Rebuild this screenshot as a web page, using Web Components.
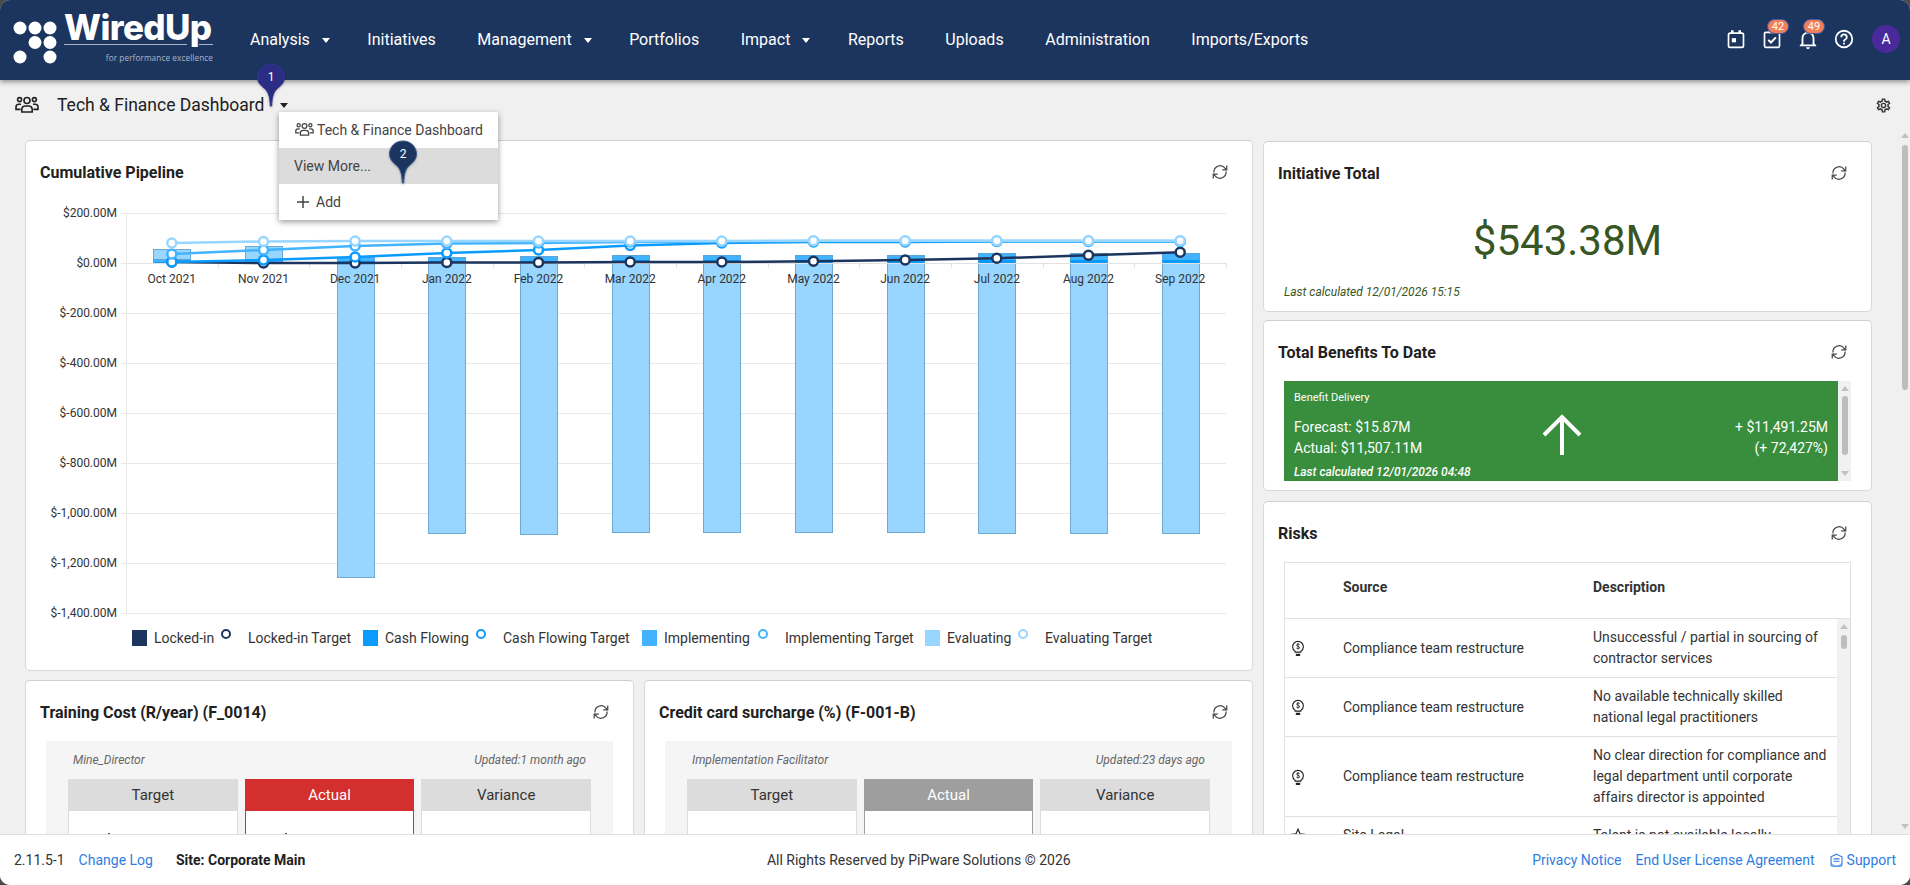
<!DOCTYPE html>
<html lang="en">
<head>
<meta charset="utf-8">
<title>WiredUp</title>
<style>
  html, body { margin: 0; height: 100%; background: #4a4a4a; overflow: hidden; }
</style>
</head>
<body>

<wu-app>
  <wu-topbar></wu-topbar>
  <wu-subbar heading="Tech &amp; Finance Dashboard"></wu-subbar>
  <wu-dashboard>
    <wu-card slot="left" flush heading="Cumulative Pipeline" style="height:531px">
      <wu-pipeline-chart></wu-pipeline-chart>
    </wu-card>
    <wu-card slot="bottom-a" heading="Training Cost (R/year) (F_0014)">
      <wu-kpi-panel owner="Mine_Director" updated="Updated:1 month ago">
        <wu-kpi-tile label="Target" mark></wu-kpi-tile>
        <wu-kpi-tile label="Actual" tone="red" mark></wu-kpi-tile>
        <wu-kpi-tile label="Variance"></wu-kpi-tile>
      </wu-kpi-panel>
    </wu-card>
    <wu-card slot="bottom-b" heading="Credit card surcharge (%) (F-001-B)">
      <wu-kpi-panel owner="Implementation Facilitator" updated="Updated:23 days ago">
        <wu-kpi-tile label="Target"></wu-kpi-tile>
        <wu-kpi-tile label="Actual" tone="grey"></wu-kpi-tile>
        <wu-kpi-tile label="Variance"></wu-kpi-tile>
      </wu-kpi-panel>
    </wu-card>
    <wu-card slot="right" heading="Initiative Total" style="height:171px">
      <wu-total value="$543.38M" note="Last calculated 12/01/2026 15:15"></wu-total>
    </wu-card>
    <wu-card slot="right" heading="Total Benefits To Date" style="height:171px;margin-top:8px">
      <wu-benefit-panel></wu-benefit-panel>
    </wu-card>
    <wu-card slot="right" heading="Risks" style="margin-top:10px">
      <wu-risk-table>
        <wu-risk-row source="Compliance team restructure">Unsuccessful / partial in sourcing of<br>contractor services</wu-risk-row>
        <wu-risk-row source="Compliance team restructure">No available technically skilled<br>national legal practitioners</wu-risk-row>
        <wu-risk-row source="Compliance team restructure">No clear direction for compliance and<br>legal department until corporate<br>affairs director is appointed</wu-risk-row>
        <wu-risk-row source="Site Legal" icon="star">Talent is not available locally</wu-risk-row>
      </wu-risk-table>
    </wu-card>
  </wu-dashboard>
  <wu-footer></wu-footer>
</wu-app>

<script>
const ICONS = {
    people: `<g fill="none" stroke="currentColor" stroke-width="1.6"><circle cx="12" cy="7.5" r="3"/><circle cx="4.6" cy="6.6" r="2"/><circle cx="19.4" cy="6.6" r="2"/><path d="M6.8 19v-2.6a3.6 3.6 0 0 1 3.6-3.4h3.2a3.6 3.6 0 0 1 3.6 3.4V19z"/><path d="M6 11.2H3.8A2.8 2.8 0 0 0 1 14v2.4h4.6"/><path d="M18 11.2h2.2A2.8 2.8 0 0 1 23 14v2.4h-4.6"/></g>`,
    refresh: `<g fill="none" stroke="currentColor" stroke-width="1.1"><path d="M2.6 8.4A5.5 5.5 0 0 1 12.4 4.6L13.6 6"/><path d="M14 2.2V6.2H10"/><path d="M13.4 7.6A5.5 5.5 0 0 1 3.6 11.4L2.4 10"/><path d="M2 13.8V9.8H6"/></g>`,
    gear: `<path fill="currentColor" d="M12,8A4,4 0 0,1 16,12A4,4 0 0,1 12,16A4,4 0 0,1 8,12A4,4 0 0,1 12,8M12,10A2,2 0 0,0 10,12A2,2 0 0,0 12,14A2,2 0 0,0 14,12A2,2 0 0,0 12,10M10,22C9.75,22 9.54,21.82 9.5,21.58L9.13,18.93C8.5,18.68 7.96,18.34 7.44,17.94L4.95,18.95C4.73,19.03 4.46,18.95 4.34,18.73L2.34,15.27C2.21,15.05 2.27,14.78 2.46,14.63L4.57,12.97L4.5,12L4.57,11L2.46,9.37C2.27,9.22 2.21,8.95 2.34,8.73L4.34,5.27C4.46,5.05 4.73,4.96 4.95,5.05L7.44,6.05C7.96,5.66 8.5,5.32 9.13,5.07L9.5,2.42C9.54,2.18 9.75,2 10,2H14C14.25,2 14.46,2.18 14.5,2.42L14.87,5.07C15.5,5.32 16.04,5.66 16.56,6.05L19.05,5.05C19.27,4.96 19.54,5.05 19.66,5.27L21.66,8.73C21.79,8.95 21.73,9.22 21.54,9.37L19.43,11L19.5,12L19.43,13L21.54,14.63C21.73,14.78 21.79,15.05 21.66,15.27L19.66,18.73C19.54,18.95 19.27,19.04 19.05,18.95L16.56,17.95C16.04,18.34 15.5,18.68 14.87,18.93L14.5,21.58C14.46,21.82 14.25,22 14,22H10M11.25,4L10.88,6.61C9.68,6.86 8.62,7.5 7.85,8.39L5.44,7.35L4.69,8.65L6.8,10.2C6.4,11.37 6.4,12.64 6.8,13.8L4.68,15.36L5.43,16.66L7.86,15.62C8.63,16.5 9.68,17.14 10.87,17.38L11.24,20H12.76L13.13,17.39C14.32,17.14 15.37,16.5 16.14,15.62L18.57,16.66L19.32,15.36L17.2,13.81C17.6,12.64 17.6,11.37 17.2,10.2L19.31,8.65L18.56,7.35L16.15,8.39C15.38,7.5 14.32,6.86 13.12,6.62L12.75,4H11.25Z"/>`,
    calendar: `<g fill="none" stroke="currentColor" stroke-width="2"><rect x="3" y="5" width="18" height="17" rx="2"/></g><rect x="6" y="1.5" width="3" height="4" fill="currentColor"/><rect x="15" y="1.5" width="3" height="4" fill="currentColor"/><rect x="7" y="11" width="5" height="5" fill="currentColor"/>`,
    task: `<g fill="none" stroke="currentColor" stroke-width="2"><rect x="3" y="4" width="18" height="18" rx="1.5"/><path d="M7.5 13l3.2 3.2 6-6.2" stroke-width="2.4"/></g><rect x="8" y="1.5" width="8" height="3.5" fill="currentColor"/>`,
    bell: `<path fill="currentColor" d="M10 21H14C14 22.1 13.1 23 12 23S10 22.1 10 21M21 19V20H3V19L5 17V11C5 7.9 7 5.2 10 4.3V4C10 2.9 10.9 2 12 2S14 2.9 14 4V4.3C17 5.2 19 7.9 19 11V17L21 19M17 11C17 8.2 14.8 6 12 6S7 8.2 7 11V18H17V11Z"/>`,
    help: `<path fill="currentColor" d="M11,18H13V16H11V18M12,2A10,10 0 0,0 2,12A10,10 0 0,0 12,22A10,10 0 0,0 22,12A10,10 0 0,0 12,2M12,20C7.59,20 4,16.41 4,12C4,7.59 7.59,4 12,4C16.41,4 20,7.59 20,12C20,16.41 16.41,20 12,20M12,6A4,4 0 0,0 8,10H10A2,2 0 0,1 12,8A2,2 0 0,1 14,10C14,12 11,11.75 11,15H13C13,12.75 16,12.5 16,10A4,4 0 0,0 12,6Z"/>`,
    bulb: `<g fill="none" stroke="currentColor" stroke-width="1.5"><path d="M8.2 16.5C6 15 4.8 12.8 4.8 10.4a7.2 7.2 0 0 1 14.4 0c0 2.4-1.2 4.6-3.4 6.1v1H8.2z"/><path d="M14.2 7.4c-.4-.9-3.8-1.3-4 .7-.2 2 4.2 1.3 4 3.6-.2 1.8-3.6 1.6-4.3.4" stroke-width="1.2"/><path d="M12 5.4v8.4" stroke-width="1"/></g><rect x="9" y="19.5" width="6" height="3" rx="1" fill="currentColor"/>`,
    star: `<path fill="none" stroke="currentColor" stroke-width="1.6" d="M12 3l2.8 6.2 6.7.7-5 4.5 1.4 6.6L12 17.6 6.1 21l1.4-6.6-5-4.5 6.7-.7z"/>`,
    plus: `<path fill="none" stroke="currentColor" stroke-width="1.5" d="M8 2v12M2 8h12"/>`,
    support: `<g fill="none" stroke="currentColor" stroke-width="1.2"><path d="M8 1.3l5.8 2.7v8.5a1.5 1.5 0 0 1-1.5 1.5H3.7a1.5 1.5 0 0 1-1.5-1.5V4z"/><path d="M4.8 6.2h6.4M4.8 8.8h6.4"/><path d="M2.2 11l4 3M13.8 11l-4 3" stroke-width=".8"/></g>`
};

function icon(name, size, box) {
    return `<svg width="${size}" height="${size}" viewBox="0 0 ${box || 24} ${box || 24}" aria-hidden="true">${ICONS[name]}</svg>`;
}

class WuBase extends HTMLElement {
    constructor() {
        super();
        this.attachShadow({ mode: "open" });
    }
    connectedCallback() {
        const template = document.createElement("template");
        template.innerHTML = `<style>${this.getStyle()}</style>${this.getMarkup()}`;
        this.shadowRoot.appendChild(template.content.cloneNode(true));
    }
    attr(name, fallback) {
        return this.hasAttribute(name) ? this.getAttribute(name) : (fallback || "");
    }
    getStyle() { return ":host{display:block}"; }
    getMarkup() { return "<slot></slot>"; }
}

class WuApp extends WuBase {
    getStyle() {
        return `
            :host {
                display: flex;
                flex-direction: column;
                height: 885px;
                background: #f0f0f0;
                border-radius: 10px;
                overflow: hidden;
                font-family: Roboto, "Liberation Sans", sans-serif;
                color: #212121;
            }
        `;
    }
}

class WuTopbar extends WuBase {
    getStyle() {
        return `
            :host {
                display: flex;
                flex: none;
                align-items: center;
                height: 80px;
                padding: 0 10px 2px 14px;
                box-sizing: border-box;
                background: #1c355e;
                color: #fff;
                box-shadow: 0 2px 5px rgba(0,0,0,.4);
                position: relative;
                z-index: 4;
            }
            .logo { display: flex; align-items: flex-start; width: 236px; flex: none; }
            .logo svg { overflow: visible; }
            .brand { width: 149px; margin-left: -1px; }
            .word {
                font: 800 35px/36px Inter, "Open Sans", sans-serif;
                letter-spacing: -.6px;
                height: 33px;
                margin-top: -6px;
                white-space: nowrap;
            }
            .rule { display: flex; gap: 12px; height: 1px; margin-top: 2px; }
            .rule i { background: #a9b5c9; height: 1px; }
            .rule i:first-child { width: 123px; }
            .rule i:last-child { width: 14px; }
            .tag {
                font: 400 8.2px/12px "Open Sans", sans-serif;
                letter-spacing: .1px;
                color: #a9b5c9;
                text-align: right;
                margin-top: 7px;
                white-space: nowrap;
            }
            nav { display: flex; align-items: center; font-size: 16px; flex: 1; }
            nav span { margin-right: 41.6px; white-space: nowrap; }
            nav span.has { margin-right: 37.5px; }
            nav span.has::after {
                content: "";
                display: inline-block;
                margin-left: 12px;
                vertical-align: 2px;
                border: 4px solid transparent;
                border-top: 5px solid #fff;
                border-bottom: 0;
            }
            .tool { position: relative; width: 36px; height: 36px; display: grid; place-items: center; }
            .tool svg { display: block; }
            .badge {
                position: absolute;
                top: -1px;
                left: 14px;
                min-width: 20px;
                height: 13px;
                border-radius: 7px;
                background: #f47e57;
                box-shadow: 0 0 0 1px #4a5aa0;
                font-size: 11px;
                line-height: 13px;
                text-align: center;
            }
            .avatar {
                margin-left: 10px;
                width: 28px;
                height: 28px;
                border-radius: 50%;
                background: #4a2a9b;
                text-align: center;
                font-size: 14px;
                line-height: 28px;
            }
        `;
    }
    getMarkup() {
        return `
            <div class="logo">
                <svg width="51" height="48" viewBox="0 -5 51 48" fill="#fff" aria-hidden="true">
                    <circle cx="6" cy="8" r="6.5"/><circle cx="21" cy="8" r="6.5"/><circle cx="36" cy="8" r="6.5"/>
                    <circle cx="21" cy="22.5" r="6.5"/><circle cx="36" cy="22.5" r="6.5"/>
                    <circle cx="6" cy="37" r="6.5"/><circle cx="36" cy="37" r="6.5"/>
                </svg>
                <div class="brand">
                    <div class="word">WiredUp</div>
                    <div class="rule"><i></i><i></i></div>
                    <div class="tag">for performance excellence</div>
                </div>
            </div>
            <nav>
                <span class="has">Analysis</span>
                <span>Initiatives</span>
                <span class="has">Management</span>
                <span>Portfolios</span>
                <span class="has">Impact</span>
                <span>Reports</span>
                <span>Uploads</span>
                <span>Administration</span>
                <span>Imports/Exports</span>
            </nav>
            <div class="tool">${icon("calendar", 20)}</div>
            <div class="tool">${icon("task", 20)}<div class="badge">42</div></div>
            <div class="tool">${icon("bell", 22)}<div class="badge">49</div></div>
            <div class="tool">${icon("help", 22)}</div>
            <div class="avatar">A</div>
        `;
    }
}

class WuPin extends WuBase {
    getStyle() {
        return `
            :host {
                position: absolute;
                left: var(--x);
                top: var(--y);
                width: 30px;
                height: 44px;
                z-index: 8;
                color: #fff;
                font-size: 12px;
            }
            svg { display: block; filter: drop-shadow(0 1px 1px rgba(0,0,0,.25)); }
            span { position: absolute; left: 0; right: 0; top: 7px; text-align: center; line-height: 14px; }
        `;
    }
    getMarkup() {
        const fill = this.attr("fill", "#1c355e");
        const edge = this.attr("edge", "#3a5a8f");
        return `
            <svg width="30" height="44" viewBox="0 0 30 44" aria-hidden="true">
                <path fill="${fill}" stroke="${edge}" d="M15 1C7.3 1 1.5 6.8 1.5 14c0 5 3 8.2 7 11.5 3.8 3.2 5.5 8 5.8 17.5h1.4c.3-9.5 2-14.3 5.8-17.5 4-3.3 7-6.5 7-11.5C28.5 6.8 22.7 1 15 1z"/>
            </svg>
            <span>${this.attr("label")}</span>
        `;
    }
}

class WuSubbar extends WuBase {
    getStyle() {
        return `
            :host {
                display: flex;
                flex: none;
                align-items: center;
                height: 48px;
                padding: 2px 18px 0 15px;
                box-sizing: border-box;
                position: relative;
                z-index: 6;
            }
            .group { width: 24px; height: 24px; color: #212121; }
            .group svg, .gear svg { display: block; }
            h1 { margin: 0 0 0 18px; font-size: 17.5px; font-weight: 400; line-height: 24px; }
            .caret {
                margin-left: 16px;
                border: 4.5px solid transparent;
                border-top: 5px solid #212121;
                border-bottom: 0;
            }
            .gear { margin-left: auto; color: #333; }
            .menu {
                position: absolute;
                left: 279px;
                top: 32px;
                width: 219px;
                background: #fff;
                box-shadow: 0 2px 6px rgba(0,0,0,.4);
                font-size: 14px;
                color: #444;
            }
            .menu div { display: flex; align-items: center; height: 36px; padding-left: 16px; padding-bottom: 1px; box-sizing: border-box; }
            .menu .on { background: #dcdcdc; padding-left: 15px; }
            .menu svg { display: block; margin-right: 3px; }
        `;
    }
    getMarkup() {
        return `
            <span class="group">${icon("people", 24)}</span>
            <h1>${this.attr("heading").replace("&", "&amp;")}</h1>
            <span class="caret"></span>
            <span class="gear">${icon("gear", 17)}</span>
            <div class="menu">
                <div>${icon("people", 19)}<span>${this.attr("heading").replace("&", "&amp;")}</span></div>
                <div class="on"><span>View More...</span></div>
                <div>${icon("plus", 16, 16)}<span style="margin-left:2px">Add</span></div>
            </div>
            <wu-pin label="1" fill="#2b2d84" edge="#34378f" style="--x:256px;--y:-17px"></wu-pin>
            <wu-pin label="2" style="--x:388px;--y:60px"></wu-pin>
        `;
    }
}

class WuDashboard extends WuBase {
    getStyle() {
        return `
            :host {
                display: flex;
                flex: 1;
                min-height: 0;
                overflow: hidden;
                padding-left: 25px;
                box-sizing: border-box;
            }
            .left { width: 1228px; flex: none; padding-top: 12px; }
            .pair { display: grid; grid-template-columns: 609px 609px; gap: 10px; margin-top: 9px; }
            .right { width: 609px; flex: none; margin-left: 10px; padding-top: 13px; }
            wu-scroll-rail { margin-left: auto; width: 11px; }
        `;
    }
    getMarkup() {
        return `
            <div class="left">
                <slot name="left"></slot>
                <div class="pair">
                    <slot name="bottom-a"></slot>
                    <slot name="bottom-b"></slot>
                </div>
            </div>
            <div class="right"><slot name="right"></slot></div>
            <wu-scroll-rail before="17" thumb="245" plain></wu-scroll-rail>
        `;
    }
}

class WuScrollRail extends WuBase {
    getStyle() {
        return `
            :host { display: flex; flex-direction: column; align-items: center; width: 13px; flex: none; background: #f1f1f1; box-sizing: border-box; position: relative; }
            :host([plain]) { background: transparent; }
            .up, .down { flex: none; width: 0; height: 0; border: 4px solid transparent; }
            .up { border-bottom: 5px solid #c1c1c1; border-top: 0; margin-top: 5px; }
            .down { border-top: 5px solid #c1c1c1; border-bottom: 0; margin-top: auto; margin-bottom: 5px; }
            .thumb { flex: none; width: 6px; border-radius: 3px; background: #bdbdbd; }
        `;
    }
    getMarkup() {
        const before = Number(this.attr("before", "7"));
        const thumb = this.attr("thumb", "40");
        return `
            <div class="up"></div>
            <div class="thumb" style="margin-top:${before - 10}px;height:${thumb}px"></div>
            <div class="down"></div>
        `;
    }
}

class WuCard extends WuBase {
    getStyle() {
        return `
            :host {
                display: block;
                box-sizing: border-box;
                background: #fff;
                border: 1px solid #d8d8d8;
                border-top-color: #cfcfcf;
                border-radius: 5px;
            }
            header {
                display: flex;
                align-items: center;
                justify-content: space-between;
                height: 60px;
                padding: 2px 23px 0 14px;
                box-sizing: border-box;
            }
            h2 { margin: 0; font-size: 16px; font-weight: 700; color: #212121; }
            header svg { display: block; color: #444; }
            .body { padding: 0 20px; }
            :host([flush]) .body { padding: 0; }
        `;
    }
    getMarkup() {
        return `
            <header><h2>${this.attr("heading")}</h2>${icon("refresh", 18, 16)}</header>
            <div class="body"><slot></slot></div>
        `;
    }
}

class WuPipelineChart extends WuBase {
    getStyle() {
        return `
            :host { display: block; }
            svg { display: block; font-family: Roboto, "Liberation Sans", sans-serif; }
            text { font-size: 12px; fill: #333; }
            .legend { display: flex; height: 22px; padding-left: 106px; font-size: 14px; color: #333; align-items: center; margin-top: -2px; }
            .key { width: 15px; height: 16px; margin-right: 7px; flex: none; }
            .ring { width: 6px; height: 6px; border-radius: 50%; border: 2.5px solid; margin: -8px 0 0 0; flex: none; }
            .legend span { white-space: nowrap; }
        `;
    }
    getMarkup() {
        const months = ["Oct 2021", "Nov 2021", "Dec 2021", "Jan 2022", "Feb 2022", "Mar 2022", "Apr 2022", "May 2022", "Jun 2022", "Jul 2022", "Aug 2022", "Sep 2022"];
        const cx = i => 171.8 + i * 91.67;
        const zero = 263;
        const grid = ["$200.00M", "$0.00M", "$-200.00M", "$-400.00M", "$-600.00M", "$-800.00M", "$-1,000.00M", "$-1,200.00M", "$-1,400.00M"];
        // [cash top, implementing top, evaluating top, evaluating bottom]
        const bars = [
            [262, 259, 249, 259], [262, 259, 246, 259], [261, 257, zero, 577], [261, 257, zero, 533],
            [261, 256, zero, 534], [260, 255, zero, 532], [260, 255, zero, 532], [260, 255, zero, 532],
            [260, 255, zero, 532], [260, 253, zero, 533], [260, 253, zero, 533], [260, 253, zero, 533]
        ];
        const lines = [
            ["#1c355e", [262, 263, 263, 262.5, 262.5, 262, 262, 261.3, 260, 258.3, 255.3, 252.3]],
            ["#0a9bff", [262, 260, 257, 253, 250, 245.5, 243, 242, 242, 241.5, 241.5, 241.5]],
            ["#42b3ff", [254, 250, 246, 243.5, 243, 242, 241.5, 241, 241, 241, 241, 241]],
            ["#99d6ff", [243, 241.5, 241, 241, 241, 241, 241, 240.7, 240.7, 240.7, 240.7, 240.7]]
        ];
        let out = "";
        grid.forEach((label, i) => {
            const y = 213 + i * 50;
            out += `<line x1="121" x2="1226" y1="${y + .5}" y2="${y + .5}" stroke="#e8e8e8"/>`;
            out += `<text x="117" y="${y + 4}" text-anchor="end">${label}</text>`;
        });
        out += `<line x1="126.5" x2="126.5" y1="213" y2="613" stroke="#e8e8e8"/>`;
        bars.forEach((b, i) => {
            const x = Math.round(cx(i) - 18.5) + .5;
            out += `<rect x="${x}" y="${b[2] + .5}" width="37" height="${b[3] - b[2]}" fill="#99d6ff" stroke="#6fa8d0"/>`;
            out += `<rect x="${x}" y="${b[1] + .5}" width="37" height="${zero - b[1]}" fill="#42b3ff" stroke="#5aa5db"/>`;
            out += `<rect x="${x}" y="${b[0]}" width="37" height="${zero - b[0]}" fill="#0a9bff"/>`;
        });
        out += `<line x1="126" x2="1226" y1="263.5" y2="263.5" stroke="#e2e2e2"/>`;
        for (let i = 0; i <= 12; i++) {
            const x = Math.round(126 + i * 91.67) + .5;
            out += `<line x1="${x}" x2="${x}" y1="263" y2="268" stroke="#e2e2e2"/>`;
        }
        months.forEach((m, i) => {
            out += `<text x="${cx(i)}" y="283" text-anchor="middle">${m}</text>`;
        });
        lines.forEach(([color, ys]) => {
            const pts = ys.map((y, i) => `${cx(i).toFixed(1)},${y}`).join(" ");
            out += `<polyline points="${pts}" fill="none" stroke="${color}" stroke-width="2.5"/>`;
            ys.forEach((y, i) => {
                out += `<circle cx="${cx(i).toFixed(1)}" cy="${y}" r="4.5" fill="#fff" stroke="${color}" stroke-width="2.5"/>`;
            });
        });
        return `
            <svg width="1226" height="428" viewBox="26 201 1226 428">${out}</svg>
            <div class="legend">
                <i class="key" style="background:#1c355e"></i><span style="width:67px">Locked-in</span>
                <i class="ring" style="border-color:#1c355e"></i><span style="margin-left:17px;width:115px">Locked-in Target</span>
                <i class="key" style="background:#0a9bff"></i><span style="width:91px">Cash Flowing</span>
                <i class="ring" style="border-color:#0a9bff"></i><span style="margin-left:17px;width:139px">Cash Flowing Target</span>
                <i class="key" style="background:#42b3ff"></i><span style="width:94px">Implementing</span>
                <i class="ring" style="border-color:#42b3ff"></i><span style="margin-left:17px;width:140px">Implementing Target</span>
                <i class="key" style="background:#99d6ff"></i><span style="width:71px">Evaluating</span>
                <i class="ring" style="border-color:#99d6ff"></i><span style="margin-left:17px">Evaluating Target</span>
            </div>
        `;
    }
}

class WuKpiPanel extends WuBase {
    getStyle() {
        return `
            :host { display: block; background: #f5f5f5; padding: 11px 22px 30px; height: 200px; box-sizing: border-box; }
            .meta {
                display: flex;
                justify-content: space-between;
                padding: 0 5px;
                font-size: 12px;
                line-height: 16px;
                font-style: italic;
                color: #666;
                margin-bottom: 11px;
            }
            .tiles { display: grid; grid-template-columns: repeat(3, 1fr); gap: 7px; }
        `;
    }
    getMarkup() {
        return `
            <div class="meta"><span>${this.attr("owner")}</span><span>${this.attr("updated")}</span></div>
            <div class="tiles"><slot></slot></div>
        `;
    }
}

class WuKpiTile extends WuBase {
    getStyle() {
        return `
            :host { display: block; --tone: #dcdcdc; --ink: #333; }
            :host([tone="red"]) { --tone: #d32f2f; --ink: #fff; }
            :host([tone="grey"]) { --tone: #9e9e9e; --ink: #fff; }
            .head { height: 32px; background: var(--tone); color: var(--ink); text-align: center; font-size: 15px; line-height: 32px; }
            .body { height: 120px; background: #fff; border: 1px solid var(--tone); border-top: 0; box-sizing: border-box; padding: 22px 0 0 39px; }
            .body i { display: block; width: 2px; height: 3px; background: #6b4a3a; }
        `;
    }
    getMarkup() {
        return `
            <div class="head">${this.attr("label")}</div>
            <div class="body">${this.hasAttribute("mark") ? "<i></i>" : ""}</div>
        `;
    }
}

class WuTotal extends WuBase {
    getStyle() {
        return `
            :host { display: block; color: #375623; padding-top: 14px; }
            .value { font-size: 42px; line-height: 50px; text-align: center; }
            .note { font-size: 12px; line-height: 16px; font-style: italic; margin-top: 18px; }
        `;
    }
    getMarkup() {
        return `<div class="value">${this.attr("value")}</div><div class="note">${this.attr("note")}</div>`;
    }
}

class WuBenefitPanel extends WuBase {
    getStyle() {
        return `
            :host { display: flex; height: 100px; color: #fff; }
            .tile {
                flex: 1;
                display: grid;
                grid-template-columns: 1fr 1fr;
                align-content: start;
                background: #388e3c;
                padding: 10px 10px 0;
                position: relative;
                overflow: hidden;
            }
            .name { grid-column: 1 / 3; font-size: 11px; line-height: 14px; margin-bottom: 12px; }
            .nums { font-size: 14px; line-height: 21px; }
            .right { text-align: right; }
            .note { grid-column: 1 / 3; font-size: 12px; line-height: 16px; font-style: italic; font-weight: 500; margin-top: 5px; }
            svg { position: absolute; left: 257px; top: 33px; }
        `;
    }
    getMarkup() {
        return `
            <div class="tile">
                <div class="name">Benefit Delivery</div>
                <div class="nums">Forecast: $15.87M<br>Actual: $11,507.11M</div>
                <div class="nums right">+ $11,491.25M<br>(+ 72,427%)</div>
                <div class="note">Last calculated 12/01/2026 04:48</div>
                <svg width="42" height="42" viewBox="0 0 42 42" aria-hidden="true">
                    <path fill="none" stroke="#fff" stroke-width="4" d="M21 41V4M3 21L21 3 39 21"/>
                </svg>
            </div>
            <wu-scroll-rail before="15" thumb="59"></wu-scroll-rail>
        `;
    }
}

class WuRiskTable extends WuBase {
    getStyle() {
        return `
            :host { display: block; border: 1px solid #e0e0e0; font-size: 14px; color: #333; }
            .head {
                display: grid;
                grid-template-columns: 58px 250px 1fr;
                height: 56px;
                padding-top: 14px;
                box-sizing: border-box;
                line-height: 21px;
                font-weight: 700;
                border-bottom: 1px solid #e0e0e0;
            }
            .rows { display: flex; }
            .list { flex: 1; min-width: 0; }
        `;
    }
    getMarkup() {
        return `
            <div class="head"><span></span><span>Source</span><span>Description</span></div>
            <div class="rows">
                <div class="list"><slot></slot></div>
                <wu-scroll-rail before="16" thumb="14"></wu-scroll-rail>
            </div>
        `;
    }
}

class WuRiskRow extends WuBase {
    getStyle() {
        return `
            :host {
                display: grid;
                grid-template-columns: 58px 250px 1fr;
                align-items: center;
                padding: 8px 0;
                line-height: 21px;
                border-bottom: 1px solid #e0e0e0;
            }
            .mark { padding-left: 4px; color: #212121; }
            .mark svg { display: block; }
        `;
    }
    getMarkup() {
        return `
            <span class="mark">${icon(this.attr("icon", "bulb"), 18)}</span>
            <span>${this.attr("source")}</span>
            <span><slot></slot></span>
        `;
    }
}

class WuFooter extends WuBase {
    getStyle() {
        return `
            :host {
                display: flex;
                flex: none;
                align-items: center;
                justify-content: space-between;
                height: 51px;
                padding: 0 14px;
                box-sizing: border-box;
                background: #fff;
                border-top: 1px solid #dedede;
                font-size: 14px;
                color: #333;
                position: relative;
                z-index: 3;
            }
            a { color: #2f7de1; text-decoration: none; }
            .side { display: flex; align-items: center; white-space: nowrap; }
            .site { font-weight: 700; color: #212121; margin-left: 23px; }
            .side svg { display: block; margin-right: 3px; }
        `;
    }
    getMarkup() {
        return `
            <div class="side"><span>2.11.5-1</span><a href="#" style="margin-left:14px">Change Log</a><span class="site">Site: Corporate Main</span></div>
            <div class="side">All Rights Reserved by PiPware Solutions © 2026</div>
            <div class="side">
                <a href="#">Privacy Notice</a>
                <a href="#" style="margin-left:14px">End User License Agreement</a>
                <a href="#" style="margin-left:14px;display:flex;align-items:center">${icon("support", 15, 16)}Support</a>
            </div>
        `;
    }
}

customElements.define("wu-scroll-rail", WuScrollRail);
customElements.define("wu-pin", WuPin);
customElements.define("wu-app", WuApp);
customElements.define("wu-topbar", WuTopbar);
customElements.define("wu-subbar", WuSubbar);
customElements.define("wu-dashboard", WuDashboard);
customElements.define("wu-card", WuCard);
customElements.define("wu-pipeline-chart", WuPipelineChart);
customElements.define("wu-kpi-panel", WuKpiPanel);
customElements.define("wu-kpi-tile", WuKpiTile);
customElements.define("wu-total", WuTotal);
customElements.define("wu-benefit-panel", WuBenefitPanel);
customElements.define("wu-risk-table", WuRiskTable);
customElements.define("wu-risk-row", WuRiskRow);
customElements.define("wu-footer", WuFooter);
</script>
</body>
</html>
